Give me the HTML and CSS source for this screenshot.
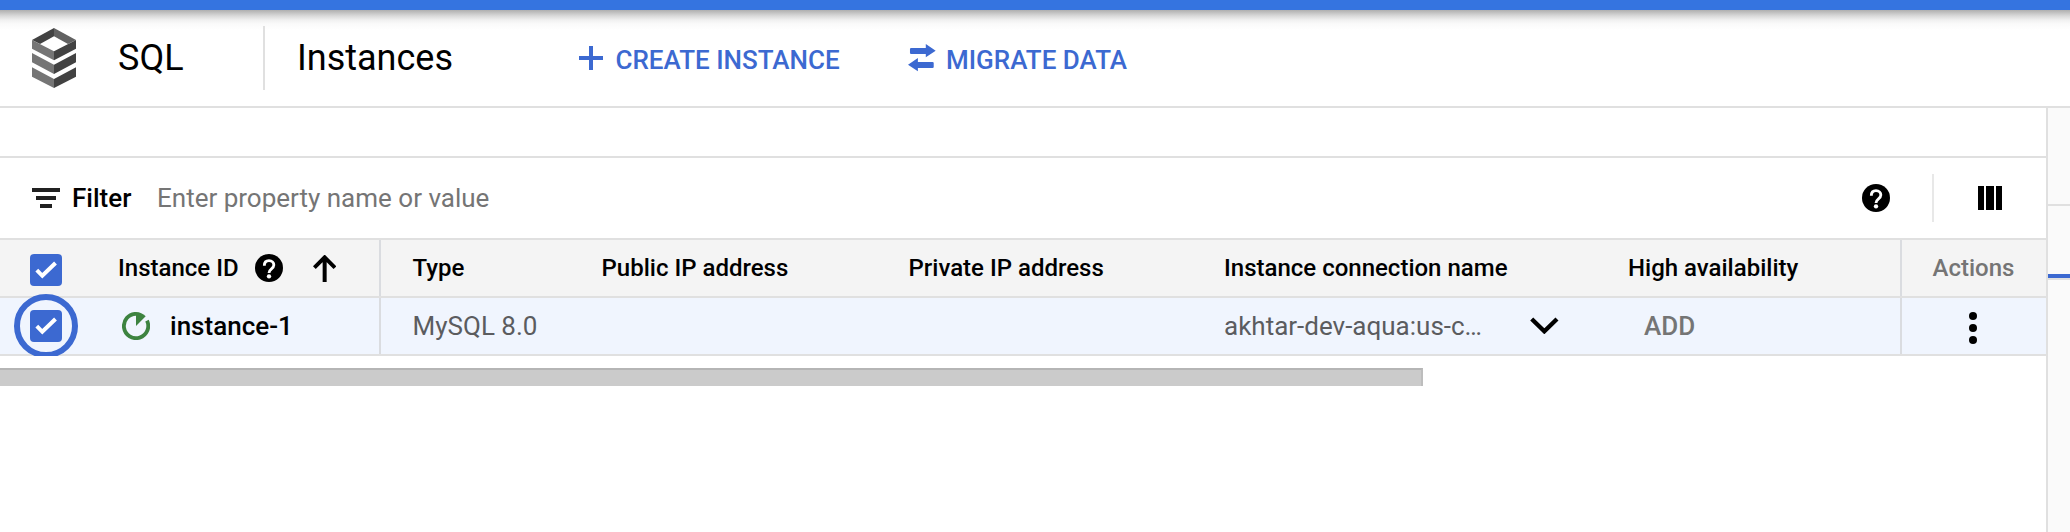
FILE: index.html
```html
<!DOCTYPE html>
<html lang="en">
<head>
<meta charset="utf-8">
<title>SQL Instances</title>
<link rel="stylesheet" href="styles.css">
</head>
<body>
<svg class="defs" aria-hidden="true">
  <symbol id="help" viewBox="0 0 84 84">
    <circle cx="42" cy="42" r="42"/>
    <path d="M28 35C28 25 34 20 42 20C51 20 56.500 26 56.500 33C56.500 45 42 44 42 57" fill="none" stroke="#fff" stroke-width="8.500"/>
    <circle cx="42" cy="67" r="6.500" fill="#fff"/>
  </symbol>
  <symbol id="check" viewBox="0 0 32 32">
    <path d="M6.800 16.200L12.300 21.800L25.500 9" fill="none" stroke="#fff" stroke-width="4"/>
  </symbol>
</svg>
<div class="topbar"></div>
<header class="header">
  <svg class="logo" viewBox="96 84 132 180">
    <path fill="#424242" d="M96 120L162 84V109L120 132Z"/>
    <path fill="#616161" d="M162 84L228 120L204 132L162 109Z"/>
    <path fill="#757575" d="M96 120L162 154V181L96 146ZM96 159L162 194V222L96 187ZM96 202L162 237V264L96 230Z"/>
    <path fill="#424242" d="M228 120L162 154V181L228 146ZM228 159L162 194V222L228 187ZM228 202L162 237V264L228 230Z"/>
  </svg>
  <div class="product">SQL</div>
  <h1 class="title">Instances</h1>
  <button class="action create">
    <svg class="plus" viewBox="0 0 24 24"><path d="M0 10H10V0H14V10H24V14H14V24H10V14H0Z"/></svg>
    <span>CREATE INSTANCE</span>
  </button>
  <button class="action migrate">
    <svg class="swap" viewBox="931 132 70 82" preserveAspectRatio="none"><path d="M976 132L1001 152L976 172V162H939Q936 162 936 159V147Q936 144 939 144H976ZM956 174L931 194L956 214V204H993Q996 204 996 201V189Q996 186 993 186H956Z"/></svg>
    <span>MIGRATE DATA</span>
  </button>
</header>
<div class="body">
  <main class="main">
    <div class="spacer"></div>
    <div class="filter">
      <svg class="filter-icon" viewBox="0 0 28 20"><path d="M0 0H28V4H0ZM4 8H24V12H4ZM8 16H20V20H8Z"/></svg>
      <span class="filter-label">Filter</span>
      <span class="placeholder">Enter property name or value</span>
      <svg class="help"><use href="#help"/></svg>
      <div class="columns">
        <svg class="columns-icon" viewBox="0 0 24 24"><path d="M0 0H6V24H0ZM8 0H16V24H8ZM18 0H24V24H18Z"/></svg>
      </div>
    </div>
    <div class="row head">
      <div class="cell select"><svg class="box"><use href="#check"/></svg></div>
      <div class="cell id">
        <span>Instance ID</span>
        <svg class="help"><use href="#help"/></svg>
        <svg class="sort" viewBox="940 345 70 81"><path d="M944 383L975 352L1006 383M975 352V426" fill="none" stroke="#000" stroke-width="12"/></svg>
      </div>
      <div class="cell type">Type</div>
      <div class="cell">Public IP address</div>
      <div class="cell">Private IP address</div>
      <div class="cell">Instance connection name</div>
      <div class="cell">High availability</div>
      <div class="cell actions">Actions</div>
    </div>
    <div class="row data">
      <div class="cell select"><div class="ring"><svg class="box"><use href="#check"/></svg></div></div>
      <div class="cell id">
        <svg class="status" viewBox="-42 -42 84 84">
          <path d="M33 -16A36.500 36.500 0 1 1 0 -36.500" fill="none" stroke="#3d8340" stroke-width="11.500"/>
          <path d="M0 0V-42A42 42 0 0 1 29 -29Z" fill="#3d8340"/>
        </svg>
        <span class="name">instance-1</span>
      </div>
      <div class="cell type">MySQL 8.0</div>
      <div class="cell"></div>
      <div class="cell"></div>
      <div class="cell connection">
        <span class="conn-name">akhtar-dev-aqua:us-c…</span>
        <svg class="chevron" viewBox="990 260 86 52"><path d="M995 266L1033 303L1071 266" fill="none" stroke="#000" stroke-width="13"/></svg>
      </div>
      <div class="cell"><span class="add">ADD</span></div>
      <div class="cell actions"><svg class="kebab" viewBox="0 0 8 32"><circle cx="4" cy="4" r="4"/><circle cx="4" cy="16" r="4"/><circle cx="4" cy="28" r="4"/></svg></div>
    </div>
    <div class="scrollbar"></div>
  </main>
  <aside class="side">
    <div class="side-head"></div>
    <div class="side-tab"></div>
  </aside>
</div>
</body>
</html>
```
FILE: styles.css
```css
* { box-sizing: border-box; }
body {
  margin: 0;
  height: 532px;
  display: flex;
  flex-direction: column;
  overflow: hidden;
  background: #fff;
  color: #000;
  font: 400 26px Roboto, sans-serif;
  white-space: nowrap;
}
svg { display: block; flex: none; }
.defs { position: absolute; width: 0; height: 0; }
.topbar {
  flex: none;
  height: 10px;
  background: #3574e0;
}
.header {
  flex: none;
  height: 98px;
  display: flex;
  align-items: center;
  padding-left: 32px;
  border-bottom: 2px solid #e0e0e0;
  background: linear-gradient(#afafaf 0, #bdbdbd 2px, #dadada 6px, #f0f0f0 10px, #fafafa 14px, #fff 20px);
}
.logo { width: 44px; height: 60px; }
.product {
  width: 145px;
  margin-left: 42px;
  font-size: 36px;
}
.title {
  margin: 0;
  height: 64px;
  width: 276px;
  padding-left: 32px;
  border-left: 2px solid #e0e0e0;
  font-size: 36px;
  font-weight: 400;
  line-height: 64px;
}
.action {
  display: flex;
  align-items: center;
  margin: 0;
  padding: 4px 0 0;
  border: 0;
  background: none;
  color: #3c69d1;
  font: 500 26px Roboto, sans-serif;
}
.action svg { fill: currentColor; margin-top: -4px; }
.create { width: 329px; margin-left: 40px; }
.plus { width: 24px; height: 24px; margin-right: 12.500px; }
.swap { width: 27.700px; height: 27.300px; margin-right: 10.300px; }
.body { flex: 1; display: flex; }
.main {
  width: 2048px;
  border-right: 2px solid #e0e0e0;
}
.spacer { height: 50px; border-bottom: 2px solid #e0e0e0; }
.filter {
  height: 82px;
  display: flex;
  align-items: center;
  padding-left: 32px;
  border-bottom: 2px solid #e0e0e0;
}
.filter-icon { width: 28px; height: 20px; fill: #212121; }
.filter-label { width: 85px; margin-left: 12px; font-weight: 500; }
.placeholder { flex: 1; color: #757575; }
.help { width: 28px; height: 28px; }
.columns {
  width: 114px;
  height: 48px;
  margin-left: 42px;
  padding: 12px 0 0 44px;
  border-left: 2px solid #e8e8e8;
}
.columns-icon { width: 24px; height: 24px; }
.row {
  height: 58px;
  display: grid;
  grid-template-columns: 118px 263px 220.500px 307px 315.500px 404px 272px 146px;
  grid-template-rows: 56px;
  border-bottom: 2px solid #e0e0e0;
}
.head { background: #f4f4f4; font-size: 24px; font-weight: 500; }
.data { background: #f0f5fe; color: #5b5c5f; }
.cell { display: flex; align-items: center; }
.id { border-right: 2px solid #dadce0; color: #000; }
.id .help { margin-left: 16px; }
.sort { width: 23.300px; height: 27px; margin-left: 30.500px; }
.type { padding-left: 31.600px; }
.box {
  width: 32px;
  height: 32px;
  border-radius: 4px;
  background: #3c69d1;
}
.head .box { margin: 4px 0 0 30px; }
.data .select { clip-path: inset(-10px 0 -2px 0); }
.ring {
  flex: none;
  width: 64px;
  height: 64px;
  margin-left: 14px;
  border: 6px solid #3c69d1;
  border-radius: 50%;
  display: grid;
  place-items: center;
}
.status { width: 28px; height: 28px; margin-left: 4px; }
.name { margin-left: 20px; font-weight: 500; }
.conn-name { width: 306px; }
.chevron { width: 28.700px; height: 17.300px; margin-top: -1px; }
.add { margin-left: 16px; font-weight: 500; color: #757575; }
.actions {
  justify-content: center;
  padding-right: 1px;
  border-left: 2px solid #dadce0;
  color: #757575;
}
.kebab { width: 8px; height: 32px; margin-top: 4px; margin-right: 1px; fill: #000; }
.scrollbar {
  width: 1423px;
  height: 18px;
  margin-top: 12px;
  background: #cbcbcb;
  border-top: 2px solid #b5b5b5;
  border-right: 2px solid #bdbdbd;
}
.side { flex: 1; background: #fafafa; }
.side-head { height: 98px; border-bottom: 2px solid #e0e0e0; }
.side-tab {
  height: 74px;
  border-bottom: 2px solid #e0e0e0;
  box-shadow: inset 0 -4px #3c69d1;
}
```
